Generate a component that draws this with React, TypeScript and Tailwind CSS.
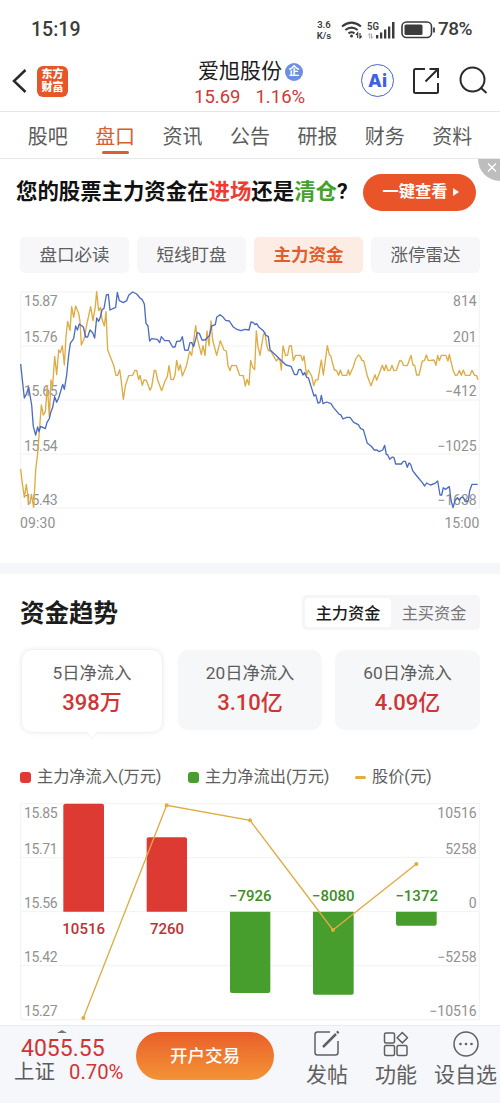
import type { ReactNode } from 'react';

const tabs = ['股吧', '盘口', '资讯', '公告', '研报', '财务', '资料'];
const chips = ['盘口必读', '短线盯盘', '主力资金', '涨停雷达'];

// chart coordinates are 3 units per pixel
const blueLine =
  '62,252 67,300 73,354 80,340 86,322 95,375 100,440 107,465 113,441 117,455 122,439 136,446 141,427 148,416 152,398 158,382 164,350 170,367 176,354 188,313 193,328 200,285 206,225 211,190 221,176 227,138 232,150 238,132 250,141 257,171 263,171 270,150 278,158 284,174 290,114 296,124 300,115 306,90 312,85 319,45 325,43 330,90 347,82 352,37 358,62 370,68 380,62 386,46 398,36 410,42 420,54 426,58 433,72 438,130 444,138 449,183 455,176 472,178 479,188 484,170 494,182 507,182 518,201 525,201 530,184 541,183 547,170 554,210 564,211 570,188 575,188 581,200 592,158 598,160 606,180 615,180 628,167 635,138 646,134 650,112 660,104 668,110 677,121 688,123 699,140 710,148 723,152 735,148 747,150 753,126 760,128 765,134 770,131 777,142 790,152 797,165 805,170 810,209 817,216 827,225 838,236 848,245 858,255 873,259 884,284 891,284 896,269 902,268 909,285 914,278 920,292 925,293 935,325 942,348 947,344 954,369 960,367 964,346 969,371 980,366 993,371 1000,382 1018,403 1022,404 1029,417 1040,412 1050,412 1061,427 1075,434 1082,446 1090,449 1102,490 1113,498 1123,510 1131,510 1137,515 1148,510 1154,496 1159,524 1163,524 1169,538 1177,531 1182,533 1187,552 1204,552 1210,544 1216,544 1222,562 1227,549 1232,553 1238,572 1248,585 1267,608 1274,618 1280,609 1291,615 1305,610 1313,603 1320,645 1325,645 1330,623 1336,628 1348,620 1353,660 1359,683 1365,662 1372,653 1378,660 1384,652 1390,652 1396,665 1405,663 1409,632 1416,613 1433,613';
const yellowLine =
  '62,567 67,610 73,652 79,613 86,668 90,670 94,643 101,682 107,570 113,520 118,455 124,375 130,405 136,395 142,317 148,410 153,300 158,318 164,229 170,284 176,210 181,218 187,197 193,255 198,170 203,124 210,151 215,80 221,112 227,78 236,100 240,125 244,195 252,178 261,130 272,80 279,122 286,80 290,35 296,92 302,82 306,118 313,138 318,95 323,210 330,228 341,256 348,286 353,286 359,269 364,305 370,358 376,318 386,287 398,286 405,271 410,271 416,299 420,286 427,316 432,300 439,301 450,331 455,320 463,271 467,271 473,300 485,332 496,301 502,290 507,257 513,299 520,299 525,285 530,241 536,271 541,254 547,288 558,262 569,214 575,226 587,137 592,175 604,224 609,197 615,226 621,153 627,197 633,123 638,180 650,226 661,182 672,210 679,213 684,257 690,272 695,256 709,257 719,286 730,287 736,318 741,298 747,315 752,241 758,262 764,269 769,153 774,200 780,226 790,165 795,158 800,195 805,212 813,214 823,232 829,243 835,235 840,240 844,270 849,198 857,227 863,225 868,198 874,197 880,242 887,226 902,226 908,242 912,228 920,285 925,270 935,288 941,317 947,300 954,299 964,240 970,285 982,197 988,224 992,227 1003,270 1010,272 1016,286 1021,270 1027,286 1040,286 1045,270 1049,285 1060,260 1067,237 1075,225 1080,229 1086,241 1091,242 1102,288 1113,317 1125,284 1130,301 1147,256 1153,272 1158,255 1164,272 1170,271 1176,256 1182,272 1189,271 1199,242 1205,243 1210,256 1222,257 1233,226 1239,255 1244,256 1250,285 1257,285 1267,243 1273,242 1279,225 1285,242 1302,240 1308,256 1313,226 1318,242 1324,226 1337,226 1344,243 1348,223 1359,270 1366,286 1372,285 1378,271 1384,286 1390,270 1396,286 1410,286 1416,271 1424,286 1430,287 1434,299';

const bars = [
  { x: 250, value: 10516, d: 'M190 365V47q0-6 6-6h110q6 0 6 6v318z' },
  { x: 500, value: 7260, d: 'M440 365V148q0-6 6-6h109q6 0 6 6v217z' },
  { x: 750, value: -7926, d: 'M690 365v238q0 6 6 6h109q6 0 6-6V365z' },
  { x: 999, value: -8080, d: 'M939 365v243q0 6 6 6h110q6 0 6-6V365z' },
  { x: 1249, value: -1372, d: 'M1188 365v36q0 6 6 6h110q6 0 6-6V365z' },
];
const pricePoints = [[250, 684], [500, 46], [750, 91], [999, 420], [1249, 222]];

function Grid({ top, left, right }: { top: number; left: string[]; right: string[] }) {
  const offsets = [43, 151, 313, 476, 638];
  return (
    <g>
      <g stroke="#f1f2f4" strokeWidth="3" fill="none">
        <rect x="62" y={top} width="1376" height="648" />
        <path d={`M62 ${top + 162}h1376M62 ${top + 324}h1376M62 ${top + 486}h1376`} />
      </g>
      <g fill="#919191" fontSize="42">
        {left.map((label, i) => (
          <text key={label} x="72" y={top + offsets[i]} textLength="101">{label}</text>
        ))}
        {right.map((label, i) => (
          <text key={label} x="1430" y={top + offsets[i]} textAnchor="end">{label.replace('-', '−')}</text>
        ))}
      </g>
    </g>
  );
}

function StatusBar() {
  return (
    <div className="flex h-[58px] items-center pl-[31px] pr-[28px] text-[#3c3c3c]">
      <span className="mt-[2px] font-[Roboto] text-[19.500px] font-medium">15:19</span>
      <div className="ml-auto mt-px flex items-center font-[Roboto]">
        <div className="flex w-[18px] flex-col items-center text-[9.500px] font-semibold leading-[11px]">
          <span>3.6</span>
          <span>K/s</span>
        </div>
        <svg className="ml-2" width="22" height="18" viewBox="0 0 22 18" fill="none" stroke="currentColor" strokeWidth="2">
          <path d="M1 5.500Q10.500-2.300 20 5.500M4.300 9q6.200-4.800 12.400 0M7.500 12.300q3-2 6 0" />
          <circle cx="10.500" cy="15" r="1.500" fill="currentColor" stroke="none" />
          <path d="m15 14 1.700-2v5M19 12v5l1.700-2" strokeWidth="1.200" />
        </svg>
        <svg className="ml-1" width="28" height="18" viewBox="0 0 28 18" fill="currentColor">
          <text x="0" y="8.500" fontSize="10" fontWeight="600" textLength="12" lengthAdjust="spacingAndGlyphs">5G</text>
          <path d="M9 14h2.300v3.500H9zM13 11.500h2.300v6H13zM17 8.500h2.300v9H17zM21 5.500h2.300v12H21zM25 1h2.500v16.500H25z" />
          <path d="m1 14.500 1.700-2v5M4.500 12.500v5l1.700-2" fill="none" stroke="#aaa" strokeWidth="1" />
        </svg>
        <svg className="ml-1.5" width="35" height="18" viewBox="0 0 35 18" fill="none">
          <rect x="1" y="1" width="29.500" height="15.500" rx="4.500" stroke="currentColor" strokeWidth="1.600" />
          <rect x="3.500" y="3.500" width="18" height="10.500" rx="1.500" fill="currentColor" />
          <path d="M33 6.500v5" stroke="currentColor" strokeWidth="1.800" />
        </svg>
        <span className="ml-0.5 text-[19px] font-medium tracking-[-0.500px]">78%</span>
      </div>
    </div>
  );
}

function Header() {
  return (
    <div className="flex h-[53.500px] border-b border-[#e8e8e8] pl-3 pr-3">
      <svg className="mt-[10px]" width="15" height="26" viewBox="0 0 15 26" fill="none" stroke="#2a2a2a" strokeWidth="2.500">
        <path d="M13.500 2 2 13l11.500 11" />
      </svg>
      <div className="ml-[10px] mt-[8px] flex h-[31px] w-[31px] flex-col items-center justify-center rounded-[6px] bg-[#e65627] pb-px text-[11px] font-black leading-[13px] text-white">
        <span>东方</span>
        <span>财富</span>
      </div>
      <div className="ml-[130px] w-[112px]">
        <div className="flex h-[27px] items-center gap-[3px]">
          <span className="whitespace-nowrap text-[21px] leading-[25px] text-[#1b1b1b]">爱旭股份</span>
          <span className="flex h-[18px] w-[18px] items-center justify-center rounded-full bg-[#6e8fdf] text-[11px] font-bold leading-none text-white">企</span>
        </div>
        <div className="-ml-[4px] flex gap-[15px] whitespace-nowrap font-[Roboto] text-[18.500px] leading-[24px] text-[#cf3838]">
          <span>15.69</span>
          <span>1.16%</span>
        </div>
      </div>
      <div className="ml-auto flex items-start pt-[6px] text-[#2a2a2a]">
        <div className="mr-[18px] flex h-[33px] w-[33px] items-center justify-center rounded-full border-[1.500px] border-[#4863d8] font-[Inter] text-[18px] font-extrabold text-[#3f60e0]">Ai</div>
        <svg className="mr-[19px] mt-[3px]" width="28" height="28" viewBox="0 0 28 28" fill="none" stroke="currentColor" strokeWidth="2">
          <path d="M13 2H3.500A1.500 1.500 0 0 0 2 3.500v21A1.500 1.500 0 0 0 3.500 26h21a1.500 1.500 0 0 0 1.500-1.500V16M17.500 2H26v9M26 2 13.500 14.500" />
        </svg>
        <svg className="mt-[2px]" width="29" height="29" viewBox="0 0 29 29" fill="none" stroke="currentColor" strokeWidth="2">
          <circle cx="13.500" cy="13.500" r="12" />
          <path d="m22 22 5.500 5" />
        </svg>
      </div>
    </div>
  );
}

function Banner() {
  return (
    <div className="relative flex h-[78px] overflow-hidden pl-4">
      <p className="mt-[17px] whitespace-nowrap text-[21.400px] font-bold leading-[32px] text-[#111]">
        您的股票主力资金在<span className="text-[#ee3a32]">进场</span>还是<span className="text-[#42a22c]">清仓</span><span className="font-[Roboto]">?</span>
      </p>
      <div className="absolute left-[363px] top-[15px] flex h-[37px] w-[113px] items-center justify-center gap-[5px] rounded-full bg-[#ea5429] pl-[2px] text-[16.300px] font-bold text-white">
        一键查看
        <span className="border-y-4 border-l-[6px] border-y-transparent border-l-white" />
      </div>
      <svg className="absolute right-0 top-0" width="22" height="22" viewBox="0 0 22 22" fill="none">
        <path d="M0 0h22v22A22 22 0 0 1 0 0" fill="#bdbdbd" />
        <path d="m10 4.500 8 8m0-8-8 8" stroke="#fff" strokeWidth="1.300" />
      </svg>
    </div>
  );
}

function FlowCard({ title, value, className }: { title: string; value: string; className: string }) {
  return (
    <div className={`relative rounded-[10px] pt-[11px] text-center ${className}`}>
      <div className="text-[17.300px] leading-[24px] text-[#5e5e5e]">{title}</div>
      <div className="mt-[2px] text-[22px] font-medium leading-[32px] text-[#cf3535]">{value}</div>
    </div>
  );
}

function FooterItem({ label, children, className }: { label: string; children: ReactNode; className: string }) {
  return (
    <div className={`flex flex-col items-center pt-[4px] text-[#606060] ${className}`}>
      <svg width="28" height="28" viewBox="0 0 28 28" fill="none" stroke="currentColor" strokeWidth="1.500">{children}</svg>
      <span className="mt-[4px] whitespace-nowrap text-[21px] leading-[27px]">{label}</span>
    </div>
  );
}

export default function App() {
  return (
    <div className="flex h-[1103px] w-[500px] flex-col overflow-hidden bg-white font-[Roboto,'Noto_Sans_CJK_SC',sans-serif]">
      <StatusBar />
      <Header />
      <nav className="flex h-[47px] border-b border-[#e8e8e8] px-[14px]">
        {tabs.map((tab) => (
          <div key={tab} className={`flex flex-1 flex-col items-center pt-[10px] text-[20px] leading-[30px] ${tab === '盘口' ? 'text-[#d8602c]' : 'text-[#5c5c5c]'}`}>
            {tab}
            {tab === '盘口' && <span className="-mt-px h-[3px] w-[27px] rounded-full bg-[#d8602c]" />}
          </div>
        ))}
      </nav>
      <Banner />
      <div className="flex h-9 gap-2 px-5">
        {chips.map((chip) => (
          <div key={chip} className={`flex flex-1 items-center justify-center rounded-[5px] pt-px text-[17.500px] ${chip === '主力资金' ? 'bg-[#fdece4] font-bold text-[#e15d2c]' : 'bg-[#f7f7f9] text-[#5e5e5e]'}`}>
            {chip}
          </div>
        ))}
      </div>
      <svg className="mt-[7.500px] h-[260px] w-[500px] shrink-0" viewBox="0 0 1500 780">
        <Grid top={36} left={['15.87', '15.76', '15.65', '15.54', '15.43']} right={['814', '201', '-412', '-1025', '-1638']} />
        <g fill="#919191" fontSize="42">
          <text x="60" y="743" textLength="106">09:30</text>
          <text x="1438" y="743" textAnchor="end">15:00</text>
        </g>
        <polyline points={yellowLine} fill="none" stroke="#dfab43" strokeWidth="4" strokeLinejoin="round" />
        <polyline points={blueLine} fill="none" stroke="#4c6bc4" strokeWidth="4" strokeLinejoin="round" />
      </svg>
      <div className="mt-[22.500px] h-[11px] shrink-0 bg-[#f5f6f9]" />

      <div className="flex h-[76.500px] shrink-0 items-center justify-between px-5">
        <h2 className="mt-[5px] text-[24.500px] font-bold text-[#1c1c1c]">资金趋势</h2>
        <div className="mt-[2px] flex h-[35px] w-[178px] rounded-[5px] bg-[#f6f6f8] p-[3px] text-[16.200px] leading-[31px]">
          <span className="w-[86px] rounded-[4px] bg-white text-center font-medium text-[#1b1b1b]">主力资金</span>
          <span className="flex-1 text-center text-[#777]">主买资金</span>
        </div>
      </div>
      <div className="flex h-[83px] shrink-0 pl-[22px]">
        <div className="relative">
          <FlowCard title="5日净流入" value="398万" className="h-[82px] w-[140px] bg-white shadow-[0_0_5px_rgba(0,0,0,0.12)]" />
          <svg className="absolute left-[62px] top-[81px]" width="16" height="9" viewBox="0 0 16 9">
            <path d="M0 0h16q-3 1-5 4L8 8 5 4Q3 1 0 0" fill="#fff" stroke="#eee" strokeWidth=".7" />
            <path d="M0 0h16" stroke="#fff" strokeWidth="2" />
          </svg>
        </div>
        <FlowCard title="20日净流入" value="3.10亿" className="ml-[16px] h-[80px] w-[144px] bg-[#f6f7f9]" />
        <FlowCard title="60日净流入" value="4.09亿" className="ml-[13px] h-[80px] w-[145px] bg-[#f6f7f9]" />
      </div>
      <div className="flex h-[57px] shrink-0 items-center pl-5 pt-[32px] text-[16.200px] text-[#5e5e5e]">
        <span className="mr-[6px] h-[11px] w-[11px] rounded-[3px] bg-[#df3b34]" />
        <span className="w-[151px] whitespace-nowrap">主力净流入(万元)</span>
        <span className="mr-[6px] h-[11px] w-[11px] rounded-[3px] bg-[#489e2c]" />
        <span className="w-[150px] whitespace-nowrap">主力净流出(万元)</span>
        <span className="mr-[6px] h-[2.500px] w-[11px] rounded-full bg-[#e0ad3e]" />
        <span>股价(元)</span>
      </div>

      <svg className="h-[235px] w-[500px] shrink-0" viewBox="0 0 1500 705">
        <Grid top={41} left={['15.85', '15.71', '15.56', '15.42', '15.27']} right={['10516', '5258', '0', '-5258', '-10516']} />
        {bars.map((bar) => (
          <g key={bar.value} fontSize="45" fontWeight="500" textAnchor="middle">
            <path d={bar.d} fill={bar.value > 0 ? '#de3a34' : '#489e2c'} />
            <text x={bar.x + 1} y={bar.value > 0 ? 432 : 332} fill={bar.value > 0 ? '#bf3036' : '#3d8f25'}>
              {String(bar.value).replace('-', '−')}
            </text>
          </g>
        ))}
        <polyline points={pricePoints.join(' ')} fill="none" stroke="#dfab43" strokeWidth="4" />
        {pricePoints.map(([x, y]) => (
          <circle key={x} cx={x} cy={y} r="6" fill="#e0ad3e" />
        ))}
      </svg>

      <footer className="relative z-10 flex h-[78px] shrink-0 border-t border-[#e9ebee] bg-[#f6f7fa]">
        <div className="relative w-[136px] whitespace-nowrap pt-[10px]">
          <span className="absolute left-[57px] top-[4px] border-x-[5px] border-b-[3px] border-x-transparent border-b-[#777]" />
          <div className="pl-[21px] text-[23px] leading-[25px] text-[#cf3535]">4055.55</div>
          <div className="flex items-center gap-[14px] pl-[14px] text-[20.500px] leading-[22px]">
            <span className="text-[#5c5c5c]">上证</span>
            <span className="text-[20.300px] text-[#cf3535]">0.70%</span>
          </div>
        </div>
        <button className="mt-[6px] h-[48px] w-[138px] rounded-full bg-linear-to-b from-[#e95e2a] to-[#f39336] pt-px text-[17.500px] font-medium text-white">开户交易</button>
        <FooterItem label="发帖" className="ml-[22px] w-[62px]">
          <path d="M17 2H4.500Q2 2 2 4.500v18Q2 25 4.500 25h18q2.500 0 2.500-2.500V11" />
          <path d="m10 17 13-13M24 3l1.500-1.500" strokeWidth="2.500" />
        </FooterItem>
        <FooterItem label="功能" className="ml-[7px] w-[62px]">
          <rect x="2.500" y="3" width="10" height="10" rx="1.500" />
          <rect x="2.500" y="15.500" width="10" height="10" rx="1.500" />
          <rect x="15" y="15.500" width="10" height="10" rx="1.500" />
          <path d="m20.300 2.500 5.200 5.200-5.200 5.200-5.200-5.200z" strokeLinejoin="round" />
        </FooterItem>
        <FooterItem label="设自选" className="ml-[4px] w-[69px]">
          <circle cx="14" cy="14" r="12" />
          <g fill="currentColor" stroke="none">
            <circle cx="8.500" cy="14" r="1.300" />
            <circle cx="14" cy="14" r="1.300" />
            <circle cx="19.500" cy="14" r="1.300" />
          </g>
        </FooterItem>
      </footer>
    </div>
  );
}
